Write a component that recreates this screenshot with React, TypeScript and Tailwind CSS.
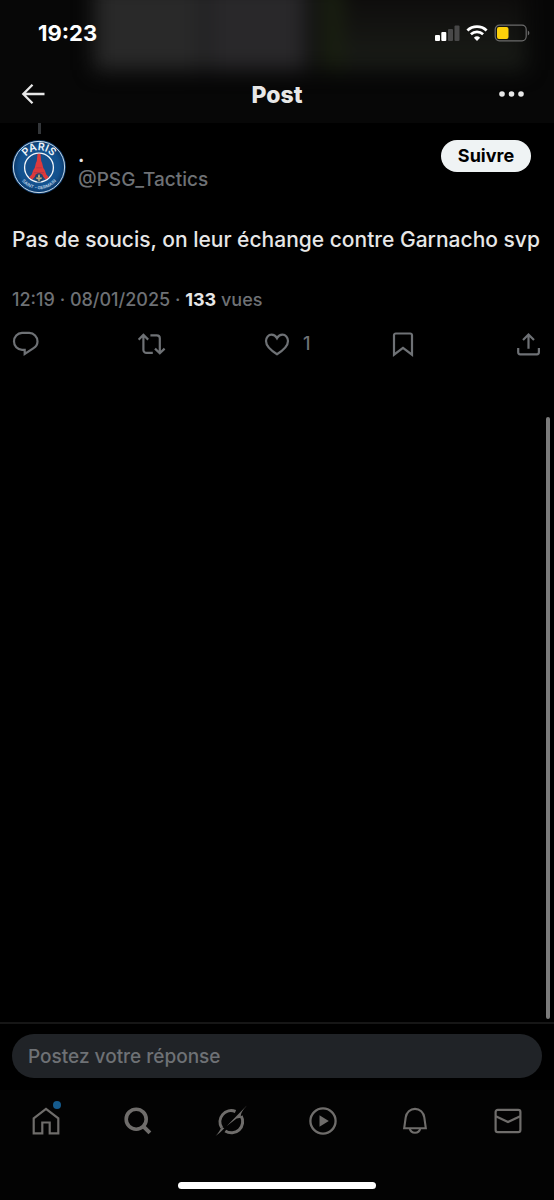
import type { ReactNode } from 'react';

const PsgBadge = () => (
  <svg viewBox="0 0 54 54" className="w-[54px] h-[54px] shrink-0" role="img" aria-label="Paris Saint-Germain">
    <defs>
      <radialGradient id="badge-blue" cx="50%" cy="50%" r="50%">
        <stop offset="0%" stopColor="#1c5f9d" />
        <stop offset="75%" stopColor="#12508d" />
        <stop offset="100%" stopColor="#0a3564" />
      </radialGradient>
      <path id="arc-top" d="M10.3 27a16.7 16.7 0 0 1 33.4 0" />
      <path id="arc-bottom" d="M4.8 27a22.2 22.2 0 0 0 44.4 0" />
      <clipPath id="inner-disc">
        <circle cx="27" cy="27.5" r="13.8" />
      </clipPath>
    </defs>
    <circle cx="27" cy="27" r="27" fill="url(#badge-blue)" />
    <circle cx="27" cy="27" r="25.6" fill="none" stroke="#c9dcec" strokeWidth="1" />
    <circle cx="27" cy="27.5" r="14.4" fill="#154f8b" stroke="#f3f6f9" strokeWidth="1.3" />
    <g clipPath="url(#inner-disc)">
      <path
        d="M25.6 13h2.8l.8 8 .9 2 1.2 5 1.4 2 1.6 4.5 7.5 8h-7q-2.2-7-7.8-7t-7.8 7h-7l7.5-8 1.6-4.5 1.4-2 1.2-5 .9-2z"
        fill="#dc3a3c"
      />
      <path d="M24.2 27.8h5.6M22 32.6h10" stroke="#a5384a" strokeWidth=".7" />
    </g>
    <circle cx="27" cy="37.6" r="4.3" fill="#1b456f" />
    <path d="M27 34c1.4 1.8 1.2 3 .4 4.4 1.3-1.8 2.8-1.1 2.4.6-.3-.5-1.2-.3-1.7.5h-.6l.3 1.7h-1.6l.3-1.7h-.6c-.5-.8-1.4-1-1.7-.5-.4-1.7 1.1-2.4 2.4-.6-.8-1.4-1-2.6.4-4.4z" fill="#c3ad79" />
    <text fill="#eef3f7" fontSize="10.5" fontWeight="600" fontFamily="Inter, sans-serif" textAnchor="middle">
      <textPath href="#arc-top" startOffset="50%">PARIS</textPath>
    </text>
    <text fill="#b8cfe3" fontSize="4.5" fontWeight="600" fontFamily="Inter, sans-serif" textAnchor="middle">
      <textPath href="#arc-bottom" startOffset="50%">SAINT - GERMAIN</textPath>
    </text>
  </svg>
);

const StatusIcons = () => (
  <div className="flex items-center gap-1.5">
    <svg viewBox="0 0 26 18" className="w-[26px] h-[18px]">
      <rect x="1" y="11" width="5" height="6" rx="1" fill="#fff" />
      <rect x="7.3" y="8" width="5" height="9" rx="1" fill="#fff" />
      <rect x="14" y="5" width="5" height="12" rx="1" fill="#484848" />
      <rect x="20.5" y="1.5" width="5" height="15.5" rx="1" fill="#484848" />
    </svg>
    <svg viewBox="0 0 22 18" className="w-[22px] h-[18px]" fill="none" stroke="#fff">
      <path d="M1.4 6.5a14 14 0 0 1 19.2 0" strokeWidth="2.8" />
      <path d="M4.9 10.2a9 9 0 0 1 12.2 0" strokeWidth="2.7" />
      <path d="M11 17l-3.1-3.3a4.6 4.6 0 0 1 6.2 0z" fill="#fff" stroke="none" />
    </svg>
    <svg viewBox="0 0 36 18" className="w-9 h-[18px]">
      <rect x="1.2" y="1.2" width="31" height="15.6" rx="4.2" fill="none" stroke="#6b6b6b" strokeWidth="1.2" />
      <rect x="3" y="3" width="11.5" height="12" rx="2" fill="#fdd10a" />
      <path d="M33.8 6.5v5q1.6-.6 1.6-2.5t-1.6-2.5z" fill="#6b6b6b" />
    </svg>
  </div>
);

const Icon = ({ children }: { children: ReactNode }) => (
  <svg viewBox="0 0 28 28" className="w-7 h-7 shrink-0" fill="none" stroke="currentColor" strokeWidth="2.2">
    {children}
  </svg>
);

const actions = [
  {
    label: 'Répondre',
    icon: <path d="M10 2.8h7.2a8.6 8.6 0 0 1 8.3 8.6c0 3.2-1.5 5.3-4.3 7L12.7 24v-4.2H10A8.2 8.2 0 0 1 2 11.4a8.4 8.4 0 0 1 8-8.6z" />,
  },
  {
    label: 'Reposter',
    icon: (
      <>
        <path d="M.6 9.6l4.8-4.7 4.8 4.7M5.4 5.5v14.4a3 3 0 0 0 3 3h6.4" />
        <path d="M26.6 18.6l-4.8 4.7-4.8-4.7M21.8 22.7V8.3a3 3 0 0 0-3-3h-6.4" />
      </>
    ),
  },
  {
    label: "J'aime",
    count: 1,
    icon: <path d="M14 24.2C7.2 20.1 3 15.7 3 11.1 3 7.3 5.6 4.7 8.5 4.7c2.3 0 4.2 1.3 5.5 3.6 1.3-2.3 3.2-3.6 5.5-3.6 2.9 0 5.5 2.6 5.5 6.4 0 4.6-4.2 9-11 13.1z" />,
  },
  {
    label: 'Signet',
    icon: <path d="M5 5.2A1.7 1.7 0 0 1 6.7 3.5h14.6A1.7 1.7 0 0 1 23 5.2v19.5l-9-6.9-9 6.9z" />,
  },
  {
    label: 'Partager',
    icon: (
      <>
        <path d="M14.5 18.8V4.7M9 10l5.5-5.5L20 10" />
        <path d="M4.2 18v4.3a2 2 0 0 0 2 2h16.7a2 2 0 0 0 2-2V18" />
      </>
    ),
  },
];

const tabs = [
  {
    label: 'Accueil',
    dot: true,
    icon: <path d="M1.7 11.3L14 1.9l12.3 9.4v15h-8.6v-10.8h-7.4v10.8H1.7z" strokeWidth="2.2" />,
  },
  {
    label: 'Recherche',
    icon: (
      <>
        <circle cx="12.2" cy="12.2" r="10" strokeWidth="3.6" />
        <path d="M19.3 19.3l6.6 6.6" strokeWidth="4" />
      </>
    ),
  },
  {
    label: 'Grok',
    icon: (
      <>
        <path d="M18.5 4.5A11.2 11.2 0 0 0 4.7 20.8" strokeWidth="3" />
        <path d="M24.2 9.1A11.2 11.2 0 0 1 8.3 24" strokeWidth="3" />
        <path d="M-1.5 29C3 24.5 2.8 22.5 5 20l2.3 1.2C4.5 24.5 1 27.2-1.5 29z" fill="currentColor" stroke="none" />
        <path d="M29.8-1.5L9.5 19.2 19.6 11.6 24 10.8C23 5.8 26.8 2.2 29.8-1.5z" fill="currentColor" stroke="none" />
      </>
    ),
  },
  {
    label: 'Vidéos',
    icon: (
      <>
        <circle cx="14" cy="14" r="12.6" strokeWidth="2.3" />
        <path d="M10.5 8.2v11.6l9.3-5.8z" fill="currentColor" stroke="none" />
      </>
    ),
  },
  {
    label: 'Notifications',
    icon: (
      <>
        <path d="M3.2 21.2l1.5-10.8C5.4 5.4 9.2 1.9 14 1.9s8.6 3.5 9.3 8.5l1.5 10.8z" strokeWidth="2.1" />
        <path d="M8.8 21.5a5.3 5.3 0 0 0 10.4 0" strokeWidth="2.1" />
      </>
    ),
  },
  {
    label: 'Messages',
    icon: (
      <>
        <rect x="1.6" y="2.9" width="24.8" height="22.2" rx="2.2" strokeWidth="2.2" />
        <path d="M1.8 9.3L14 15l12.2-5.7" strokeWidth="2.2" />
      </>
    ),
  },
];

const App = () => {
  return (
    <div className="min-h-screen flex flex-col bg-black font-['Inter',sans-serif] text-[#e7e7e7]">

      {/* Header, with the timeline showing faintly through */}
      <header className="relative overflow-hidden bg-[#070707]">
        <div className="absolute inset-x-0 -top-4 h-[86px] flex blur-[10px]" aria-hidden="true">
          <div className="w-[17%]" />
          <div className="w-[19%] bg-[#292929]" />
          <div className="w-[2%] bg-[#202022]" />
          <div className="w-[17%] bg-[#29282a]" />
          <div className="w-[3%] bg-[#101010]" />
          <div className="w-[4%] bg-[#191f10]" />
          <div className="flex-1 bg-linear-to-b from-[#0c0a0a] to-[#1a1d18]" />
          <div className="w-[5%]" />
        </div>

        <div className="relative h-[66px] pl-[38px] pr-6 flex items-center justify-between">
          <span className="text-[22px] leading-6 font-bold text-white">19:23</span>
          <StatusIcons />
        </div>

        <div className="relative h-[57px] px-5 grid grid-cols-3 items-center">
          <button aria-label="Retour" className="justify-self-start">
            <svg viewBox="0 0 26 24" className="w-[26px] h-6" fill="none" stroke="currentColor" strokeWidth="2.3">
              <path d="M24.5 11H3M12.5 1.8L3.3 11l9.2 9.2" />
            </svg>
          </button>
          <h1 className="justify-self-center text-[23px] leading-7 font-extrabold">Post</h1>
          <button aria-label="Plus d'options" className="justify-self-end pr-2">
            <svg viewBox="0 0 28 10" className="w-7 h-2.5" fill="currentColor">
              <circle cx="4" cy="4" r="2.8" />
              <circle cx="13.5" cy="4" r="2.8" />
              <circle cx="23" cy="4" r="2.8" />
            </svg>
          </button>
        </div>
      </header>

      <main className="relative flex-1">
        <article className="px-3">
          {/* Thread line to the parent post */}
          <div className="w-[54px] h-[17px] flex justify-center">
            <div className="w-[3px] h-[11px] bg-[#333639]" />
          </div>

          <div className="flex items-start">
            <PsgBadge />
            <div className="flex-1 ml-3 pt-1 text-[19px] leading-6">
              <p className="font-bold">.</p>
              <p className="font-medium text-[#6e7175]">@PSG_Tactics</p>
            </div>
            <button className="h-8 w-[90px] mr-[11px] rounded-full bg-[#eff3f4] text-black text-[18px] leading-6 font-bold">Suivre</button>
          </div>

          <p className="mt-[30px] text-[21px] leading-8 font-medium">Pas de soucis, on leur échange contre Garnacho svp</p>

          <p className="mt-8 text-[18px] leading-6 font-medium text-[#6e7175]">
            12:19 · 08/01/2025 · <span className="font-bold text-[#e7e7e7]">133</span> vues
          </p>

          <div className="mt-[18px] flex justify-between text-[#6e7175]">
            {actions.map((action) => (
              <button key={action.label} aria-label={action.label} className="w-7 flex items-center gap-3">
                <Icon>{action.icon}</Icon>
                {action.count && <span className="text-[18px] leading-6 font-medium">{action.count}</span>}
              </button>
            ))}
          </div>
        </article>

        {/* Scroll indicator */}
        <div className="absolute right-1 top-[294px] bottom-[3px] w-1 rounded-full bg-[#7b7b7b]" />
      </main>

      <form className="border-t-2 border-[#161616] px-3 pt-2.5 pb-3">
        <input
          type="text"
          aria-label="Postez votre réponse"
          placeholder="Postez votre réponse"
          className="block w-full h-11 rounded-full bg-[#202327] px-4 text-[19px] leading-6 font-medium placeholder:text-[#6e7175]"
        />
      </form>

      <nav className="bg-[#030303] pt-[17px] pb-[11px]">
        <div className="grid grid-cols-6 text-[#6f6d6b]">
          {tabs.map((tab) => (
            <button key={tab.label} aria-label={tab.label} className="flex justify-center">
              <span className="relative">
                <svg viewBox="0 0 28 28" className="w-7 h-7 overflow-visible" fill="none" stroke="currentColor">
                  {tab.icon}
                </svg>
                {tab.dot && <span className="absolute -top-1.5 -right-px w-2 h-2 rounded-full bg-[#155a8c]" />}
              </span>
            </button>
          ))}
        </div>
        <div className="mt-[47px] mx-auto w-[198px] h-[7px] rounded-full bg-white" />
      </nav>
    </div>
  );
};

export default App;
